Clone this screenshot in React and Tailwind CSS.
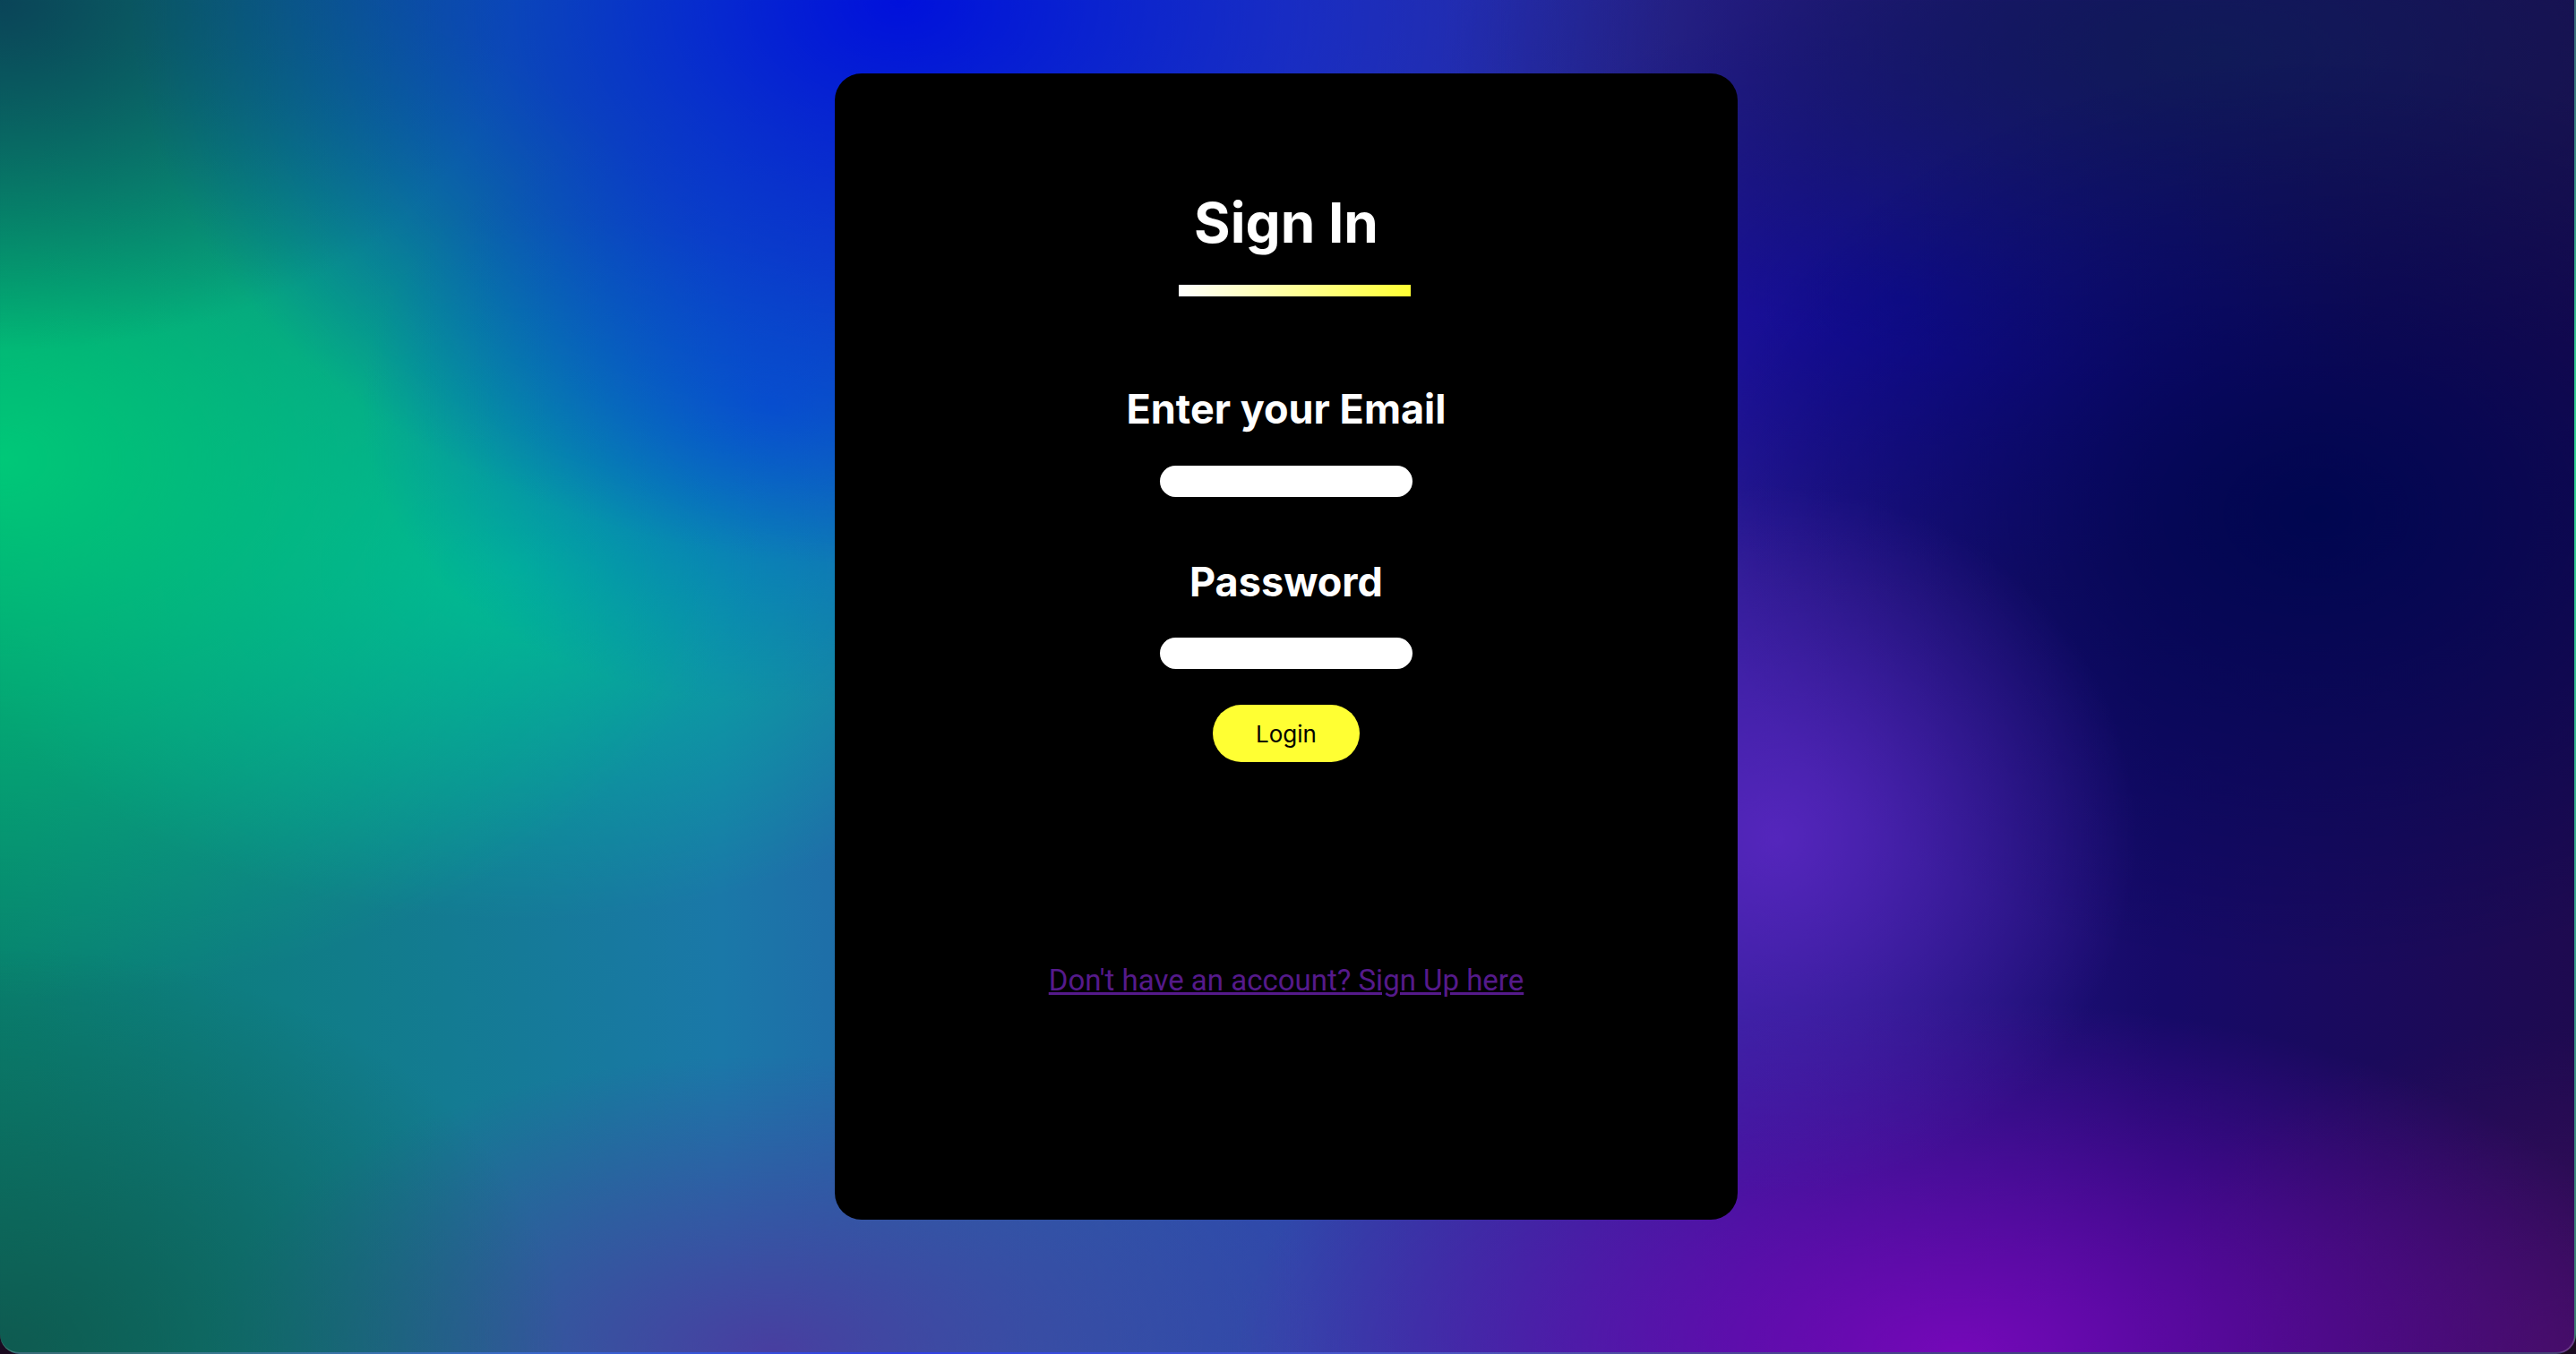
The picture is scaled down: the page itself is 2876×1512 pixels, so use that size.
import { useState } from 'react';

// mesh-like backdrop, blobs listed top layer first
const bg =
  'bg-[radial-gradient(ellipse_14%_26%_at_69%_62%,rgba(92,40,196,0.85)_0%,rgba(92,40,196,0)_100%),radial-gradient(ellipse_28%_26%_at_76%_100%,#7408b8_0%,rgba(116,8,184,0)_100%),radial-gradient(ellipse_18%_24%_at_100%_100%,#3e0e5c_0%,rgba(62,14,92,0)_100%),radial-gradient(ellipse_24%_34%_at_90%_38%,#000650_0%,rgba(0,6,80,0)_100%),radial-gradient(ellipse_30%_24%_at_86%_4%,#101a58_0%,rgba(16,26,88,0)_100%),radial-gradient(ellipse_16%_22%_at_100%_10%,#1e0a48_0%,rgba(30,10,72,0)_100%),radial-gradient(ellipse_18%_22%_at_74%_22%,#100a98_0%,rgba(16,10,152,0)_100%),radial-gradient(ellipse_30%_42%_at_35%_0%,#0010dc_0%,rgba(0,16,220,0)_100%),radial-gradient(ellipse_16%_22%_at_30%_30%,rgba(8,90,210,0.8)_0%,rgba(8,90,210,0)_100%),radial-gradient(ellipse_20%_26%_at_0%_0%,#0a4458_0%,rgba(10,68,88,0)_100%),radial-gradient(ellipse_22%_30%_at_0%_100%,#0e5a50_0%,rgba(14,90,80,0)_100%),radial-gradient(ellipse_22%_22%_at_30%_100%,#483ea0_0%,rgba(72,62,160,0)_100%),radial-gradient(ellipse_30%_40%_at_0%_34%,#00c878_0%,rgba(0,200,120,0)_100%),radial-gradient(ellipse_22%_26%_at_20%_42%,#00b4a0_0%,rgba(0,180,160,0)_100%),linear-gradient(90deg,#08806e_0%,#1a78a8_28%,#3048aa_50%,#2a1a90_68%,#160a68_84%,#1e0a50_100%)]';

const SignIn = () => {
  const [email, setEmail] = useState('');
  const [password, setPassword] = useState('');

  return (
    <div className="flex flex-col items-center pt-[136px] w-[1008px] h-[1280px] bg-black rounded-[30px]">
      <h1 className="text-[62px] leading-[62px] font-bold text-white font-['Inter',sans-serif]">
        Sign In
      </h1>
      {/* Underline */}
      <div className="mt-[38px] ml-[18px] h-[13px] w-[259px] bg-[linear-gradient(to_right,#ffffff,#ffff33)]" />

      <label className="mt-[103px] text-[45px] leading-[45px] font-bold text-white font-['Inter',sans-serif]">
        Enter your Email
      </label>
      <input
        type="email"
        value={email}
        onChange={(e) => setEmail(e.target.value)}
        className="mt-[41px] h-[35px] w-[282px] rounded-full bg-white px-4 outline-none border-0"
      />

      <label className="mt-[72px] text-[45px] leading-[45px] font-bold text-white font-['Inter',sans-serif]">
        Password
      </label>
      <input
        type="password"
        value={password}
        onChange={(e) => setPassword(e.target.value)}
        className="mt-[40px] h-[35px] w-[282px] rounded-full bg-white px-4 outline-none border-0"
      />

      <button className="mt-[40px] h-[64px] w-[164px] rounded-full bg-[#ffff33] text-black text-[26px] font-['Inter',sans-serif]">
        Login
      </button>

      <a
        href="#signup"
        className="mt-[228px] text-[33px] leading-[32px] text-[#551a8b] underline font-['Roboto',sans-serif]"
      >
        Don't have an account? Sign Up here
      </a>
    </div>
  );
};

export default function App() {
  return (
    <div className="w-full h-[1512px] bg-[#1a0a20]">
      <div className={`h-full w-full ${bg} rounded-b-[22px] border-b-2 border-r-2 border-white/20 flex justify-center pt-[82px] pr-[2px] overflow-hidden`}>
        <SignIn />
      </div>
    </div>
  );
}
